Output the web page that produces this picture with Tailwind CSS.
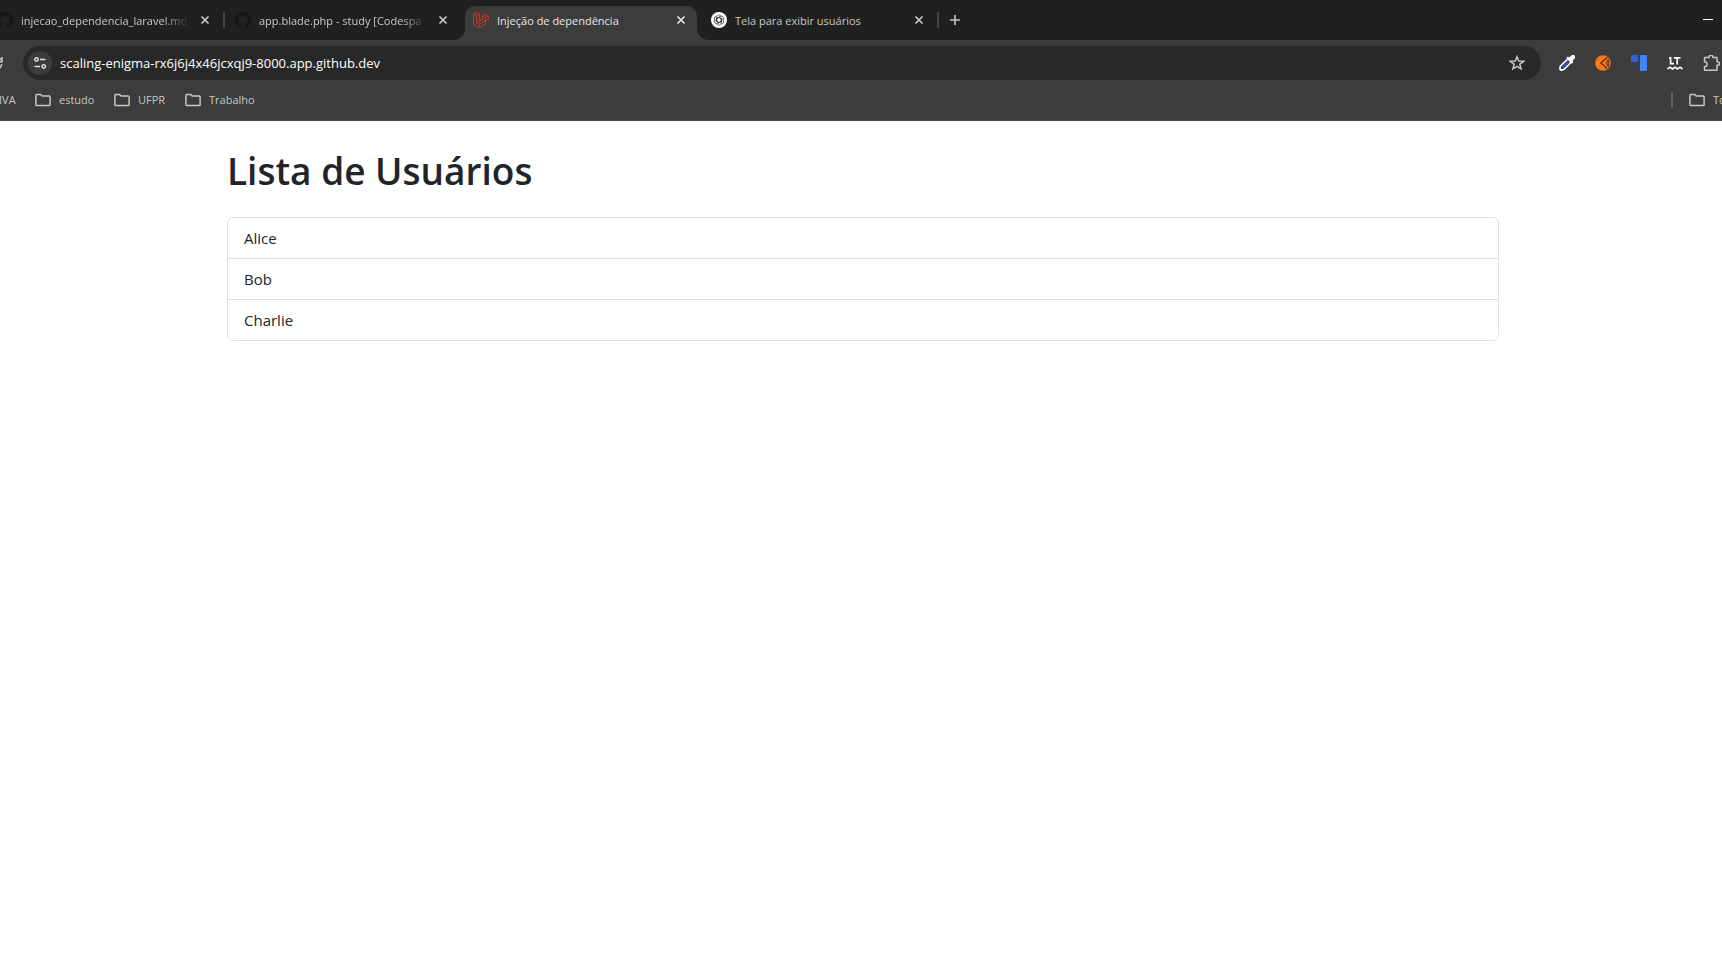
<!DOCTYPE html>
<html lang="pt-BR">
<head>
<meta charset="utf-8">
<title>Injeção de dependência</title>
<script src="https://cdn.jsdelivr.net/npm/@tailwindcss/browser@4"></script>
</head>
<body class="min-h-screen bg-white font-['Open_Sans','Noto_Sans',sans-serif] text-[#212529] overflow-x-hidden">
<svg class="hidden" aria-hidden="true">
  <symbol id="close" viewBox="0 0 10 10"><path d="M1.5 1.5l7 7M8.500 1.500l-7 7" fill="none" stroke="currentColor" stroke-width="1.7"/></symbol>
  <symbol id="github" viewBox="0 0 16 16"><path fill="currentColor" d="M8 0C3.580 0 0 3.580 0 8c0 3.540 2.290 6.530 5.470 7.590.4.070.55-.17.55-.38 0-.19-.01-.82-.01-1.490-2.010.37-2.530-.49-2.690-.94-.09-.23-.48-.94-.82-1.130-.28-.15-.68-.52-.01-.53.63-.01 1.080.58 1.230.82.72 1.210 1.870.87 2.330.66.070-.52.28-.87.51-1.070-1.780-.2-3.640-.89-3.640-3.950 0-.87.31-1.590.82-2.150-.08-.2-.36-1.020.080-2.120 0 0 .67-.21 2.200.82.64-.18 1.320-.27 2-.27s1.360.090 2 .27c1.530-1.040 2.200-.82 2.200-.82.44 1.100.16 1.920.080 2.120.51.56.82 1.270.82 2.150 0 3.070-1.870 3.750-3.650 3.950.29.25.54.73.54 1.480 0 1.070-.01 1.930-.01 2.200 0 .21.15.46.55.38A8.010 8.010 0 0 0 16 8c0-4.420-3.580-8-8-8z"/></symbol>
  <symbol id="folder" viewBox="0 0 16 14"><path d="M.9 2.300Q.9 1.400 1.800 1.400H5.600L7.200 3.100H14.200Q15.100 3.100 15.100 4V11.700Q15.100 12.600 14.200 12.600H1.800Q.9 12.600.9 11.700Z" fill="none" stroke="currentColor" stroke-width="1.5"/></symbol>
</svg>

<header class="text-[#c7c7c7]">
  <!-- Tab strip -->
  <div class="flex h-10 items-end overflow-hidden bg-[#1f2120]">
    <div class="-ml-[11px] flex h-[34px] w-[238px] shrink-0 items-center pb-[6px] pl-2">
      <svg class="size-4 shrink-0 text-[#151716]"><use href="#github"/></svg>
      <span class="ml-2 w-[168px] overflow-hidden pt-[2px] text-[11px] leading-4 whitespace-nowrap mask-r-from-85% mask-r-to-100%">injecao_dependencia_laravel.md</span>
      <button class="ml-[11px] flex size-[10px] shrink-0" aria-label="Fechar guia"><svg class="size-[10px]"><use href="#close"/></svg></button>
      <span class="ml-[13px] h-4 w-[2px] bg-[#454746]"></span>
    </div>
    <div class="flex h-[34px] w-[238px] shrink-0 items-center pb-[6px] pl-2">
      <svg class="size-4 shrink-0 text-[#151716]"><use href="#github"/></svg>
      <span class="ml-2 w-[168px] overflow-hidden pt-[2px] text-[11px] leading-4 whitespace-nowrap mask-r-from-85% mask-r-to-100%">app.blade.php - study [Codespa</span>
      <button class="ml-[11px] flex size-[10px] shrink-0" aria-label="Fechar guia"><svg class="size-[10px]"><use href="#close"/></svg></button>
    </div>
    <div class="relative mr-[6px] flex h-[34px] w-[232px] shrink-0 items-center rounded-t-[10px] bg-[#3c3c3c] pb-[6px] pl-2 text-[#e6e6e6]">
      <svg class="absolute bottom-0 -left-3 size-3" viewBox="0 0 12 12"><path d="M12 0v12H0A12 12 0 0 0 12 0" fill="#3c3c3c"/></svg>
      <svg class="absolute -right-3 bottom-0 size-3" viewBox="0 0 12 12"><path d="M0 0v12h12A12 12 0 0 1 0 0" fill="#3c3c3c"/></svg>
      <svg class="size-4 shrink-0" viewBox="0 0 16 16" fill="none" stroke="#d8352b" stroke-width=".9" stroke-linejoin="round"><path d="M.6 2.100L3.500.5l2.900 1.600v6.700l2.900-1.600V3.900l3.100-1.700 3 1.700v3.400l-3 1.700v3.200l-6 3.400-5.800-3.400ZM.6 2.100l2.900 1.700 2.900-1.700M3.500 3.800v6.700l2.900-1.700M3.500 10.500l2.900 1.700v3.400M6.400 12.200l6-3.200M9.300 3.900l3.100 1.700 3-1.700M12.400 5.600V9L9.300 7.200M6.400 8.800l2.900-1.600"/></svg>
      <span class="ml-2 w-[168px] overflow-hidden pt-[2px] text-[11px] leading-4 whitespace-nowrap">Injeção de dependência</span>
      <button class="ml-[11px] flex size-[10px] shrink-0" aria-label="Fechar guia"><svg class="size-[10px]"><use href="#close"/></svg></button>
    </div>
    <div class="flex h-[34px] w-[238px] shrink-0 items-center pb-[6px] pl-2">
      <svg class="size-4 shrink-0" viewBox="0 0 16 16"><circle cx="8" cy="8" r="8" fill="#fff"/><g fill="none" stroke="#333" stroke-width=".7"><path id="petal" d="M5.700 9.300V5.200a2.500 2.500 0 0 1 4.600-1.200M5.700 6.700L8 5.300l3.300 1.900"/><use href="#petal" transform="rotate(60 8 8)"/><use href="#petal" transform="rotate(120 8 8)"/><use href="#petal" transform="rotate(180 8 8)"/><use href="#petal" transform="rotate(240 8 8)"/><use href="#petal" transform="rotate(300 8 8)"/></g></svg>
      <span class="ml-2 w-[168px] overflow-hidden pt-[2px] text-[11px] leading-4 whitespace-nowrap">Tela para exibir usuários</span>
      <button class="ml-[11px] flex size-[10px] shrink-0" aria-label="Fechar guia"><svg class="size-[10px]"><use href="#close"/></svg></button>
      <span class="ml-[13px] h-4 w-[2px] bg-[#454746]"></span>
    </div>
    <button class="mb-[14px] ml-2 flex size-3 shrink-0" aria-label="Nova guia"><svg class="size-3" viewBox="0 0 12 12"><path d="M6 1v10M1 6h10" stroke="currentColor" stroke-width="1.600"/></svg></button>
    <button class="mr-[9px] mb-5 ml-auto h-px w-[10px] shrink-0 bg-white" aria-label="Minimizar"></button>
  </div>

  <!-- Toolbar -->
  <div class="flex h-[46px] items-center overflow-hidden bg-[#3c3c3c] py-[6px] pr-px">
    <button class="-ml-[13px] flex size-4 shrink-0" aria-label="Recarregar"><svg class="size-4" viewBox="0 0 16 16"><path d="M14.800 9A6.400 6.400 0 1 1 14 4.800" fill="none" stroke="currentColor" stroke-width="1.600"/><path d="M15 2v4.700H10.500" fill="none" stroke="currentColor" stroke-width="1.600"/></svg></button>
    <div class="ml-5 flex h-[34px] min-w-0 flex-1 items-center rounded-full bg-[#282828] pl-[5px]">
      <button class="flex size-6 shrink-0 items-center justify-center rounded-full bg-[#3c3c3c]" aria-label="Informações do site"><svg class="size-[14px]" viewBox="0 0 14 14" fill="none" stroke="#dedede" stroke-width="1.500"><circle cx="3.500" cy="3.500" r="1.700"/><path d="M7 3.500h5.500M1.500 10.500H7"/><circle cx="10.700" cy="10.500" r="1.700"/></svg></button>
      <input type="text" aria-label="Endereço" value="scaling-enigma-rx6j6j4x46jcxqj9-8000.app.github.dev" class="ml-2 h-6 min-w-0 flex-1 bg-transparent text-[13px] text-white outline-none">
      <button class="mr-4 flex size-4 shrink-0" aria-label="Adicionar aos favoritos"><svg class="size-4" viewBox="0 0 16 16"><path d="M8 1.700l1.700 4.400 4.900.2-3.800 3 1.300 4.600L8 11.300l-4.100 2.600 1.300-4.600-3.800-3 4.900-.2Z" fill="none" stroke="currentColor" stroke-width="1.500"/></svg></button>
    </div>
    <div class="ml-[18px] flex shrink-0 gap-5">
      <button aria-label="Conta-gotas"><svg class="size-4" viewBox="0 0 16 16"><path d="M9.200 3.700l3.200 3.200-7.200 7.300-3 1.100L.8 14l.6-3Z" fill="#3c3c3c" stroke="#fff" stroke-width="1.600" stroke-linejoin="round"/><path d="M3.300 13L9.300 6.800" stroke="#3949c8" stroke-width="2.400"/><path d="M7.200 2.900l1.600-1.300 1.300 1L12.300.5a2.100 2.100 0 0 1 3.200 3.200L13.400 5.900l1 1.300-1.500 1.500Z" fill="#fff"/></svg></button>
      <button aria-label="Extensão laranja"><svg class="size-4" viewBox="0 0 16 16"><circle cx="8" cy="8" r="7.800" fill="#f97a1c"/><path d="M12.200 2.200L5.800 8l6.400 5.500" fill="none" stroke="#553318" stroke-width="1.300"/><path d="M13.300 4.500Q10.300 8 13.300 11.500Q14.700 8 13.300 4.500Z" fill="#f97a1c" stroke="#553318" stroke-width="1.100"/></svg></button>
      <button aria-label="Extensão azul"><svg class="size-4" viewBox="0 0 16 16"><rect width="7" height="7" rx="1" fill="#2f62d9"/><rect x="9" width="7" height="16" rx="1" fill="#4285fa"/></svg></button>
      <button aria-label="LanguageTool"><svg class="size-4" viewBox="0 0 16 16" fill="none" stroke="#fff" stroke-width="1.700"><path d="M2 2.800h1.600V8.700H7M6.700 2.800H13.500M10.200 2.800V9.500"/><path d="M.5 14L3 12.200L5.500 14L8 12.200L10.500 14L13 12.200L15.500 14" stroke-width="1.600" stroke-linejoin="round"/></svg></button>
      <button aria-label="Extensões" class="w-[18px] shrink-0"><svg class="h-4 w-[18px]" viewBox="0 0 18 16"><path d="M1.500 2.600H6.200V2A1.800 1.800 0 0 1 9.800 2V2.600H14V6.700h.6a1.800 1.800 0 0 1 0 3.600H14V15.200H1.500V11.700a2.500 2.500 0 0 0 0-5Z" fill="none" stroke="currentColor" stroke-width="1.500" stroke-linejoin="round"/></svg></button>
    </div>
  </div>

  <!-- Bookmarks bar -->
  <nav class="flex h-[35px] items-center overflow-hidden border-b border-[#4a4a4a] bg-[#3c3c3c] pb-[7px] text-[11px] leading-4 whitespace-nowrap" aria-label="Favoritos">
    <a href="#" class="-ml-px w-9 shrink-0">IVA</a>
    <a href="#" class="flex w-[79px] items-center gap-2"><svg class="h-[14px] w-4"><use href="#folder"/></svg>estudo</a>
    <a href="#" class="flex w-[71px] items-center gap-2"><svg class="h-[14px] w-4"><use href="#folder"/></svg>UFPR</a>
    <a href="#" class="flex items-center gap-2"><svg class="h-[14px] w-4"><use href="#folder"/></svg>Trabalho</a>
    <span class="ml-auto h-4 w-[2px] bg-[#5e5e5e]"></span>
    <a href="#" class="ml-4 flex w-[33px] shrink-0 items-center gap-2"><svg class="h-[14px] w-4 shrink-0"><use href="#folder"/></svg>To</a>
  </nav>
</header>

<main class="pl-1">
  <div class="mx-auto max-w-[1272px] pt-[26px]">
    <h1 class="text-[37px] leading-[48px] font-semibold">Lista de Usuários</h1>
    <ul class="mt-[22px] divide-y divide-[#dee2e6] rounded-md border border-[#dee2e6] text-[15px] leading-6">
      <li class="px-4 py-2">Alice</li>
      <li class="px-4 py-2">Bob</li>
      <li class="px-4 py-2">Charlie</li>
    </ul>
  </div>
</main>
</body>
</html>
